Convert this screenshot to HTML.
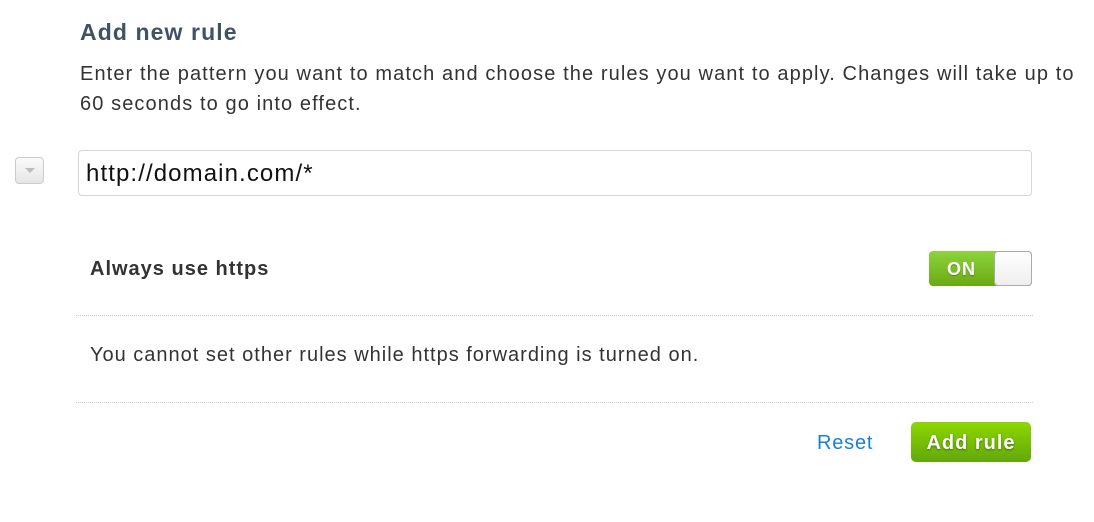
<!DOCTYPE html>
<html><head><style>
body{margin:0;width:1094px;height:522px;background:#fff;font-family:"Liberation Sans",sans-serif;position:relative;overflow:hidden}
.a{position:absolute}
</style></head><body>
<div class="a" style="left:80px;top:19px;font-size:23px;font-weight:bold;color:#3f5266;letter-spacing:1.1px">Add new rule</div>
<div class="a" style="left:80px;top:59px;width:1010px;font-size:20px;line-height:30px;color:#333;letter-spacing:1.1px">Enter the pattern you want to match and choose the rules you want to apply. Changes will take up to 60 seconds to go into effect.</div>
<div class="a" style="left:15px;top:157px;width:29px;height:27px;border:1px solid #ccc;border-radius:4px;background:linear-gradient(#fafafa,#e6e6e6);box-sizing:border-box"></div>
<div class="a" style="left:25px;top:168px;width:0;height:0;border-left:5px solid transparent;border-right:5px solid transparent;border-top:5px solid #bbb"></div>
<div class="a" style="left:78px;top:150px;width:954px;height:46px;border:1px solid #d6d6d6;border-radius:4px;box-sizing:border-box;font-size:24px;line-height:46px;padding-left:7px;color:#111;letter-spacing:1.1px">http://domain.com/*</div>
<div class="a" style="left:90px;top:258px;font-size:20px;font-weight:bold;color:#333;letter-spacing:1px">Always use https</div>
<div class="a" style="left:929px;top:251px;width:103px;height:35px;border-radius:4px;background:linear-gradient(#8ed33c,#6aaa14);"></div>
<div class="a" style="left:929px;top:251px;width:65px;height:35px;text-align:center;line-height:36px;font-size:18px;font-weight:bold;color:#fff;text-shadow:0 1px 1px rgba(0,0,0,.3);letter-spacing:1px">ON</div>
<div class="a" style="left:994px;top:251px;width:38px;height:35px;border:1px solid #aaa;border-radius:4px;box-sizing:border-box;background:linear-gradient(#fff,#eee)"></div>
<div class="a" style="left:76px;top:315px;width:957px;border-top:1px dotted #ccc"></div>
<div class="a" style="left:90px;top:344px;font-size:20px;color:#333;letter-spacing:1px">You cannot set other rules while https forwarding is turned on.</div>
<div class="a" style="left:76px;top:402px;width:957px;border-top:1px dotted #ccc"></div>
<div class="a" style="left:817px;top:432px;font-size:20px;color:#1a7fd6;letter-spacing:0.8px">Reset</div>
<div class="a" style="left:911px;top:422px;width:120px;height:40px;border-radius:5px;background:linear-gradient(#8ed600,#62a80e);color:#fff;font-weight:bold;font-size:20px;text-align:center;line-height:42px;text-shadow:0 1px 2px rgba(0,0,0,.4);letter-spacing:1px">Add rule</div>
</body></html>
